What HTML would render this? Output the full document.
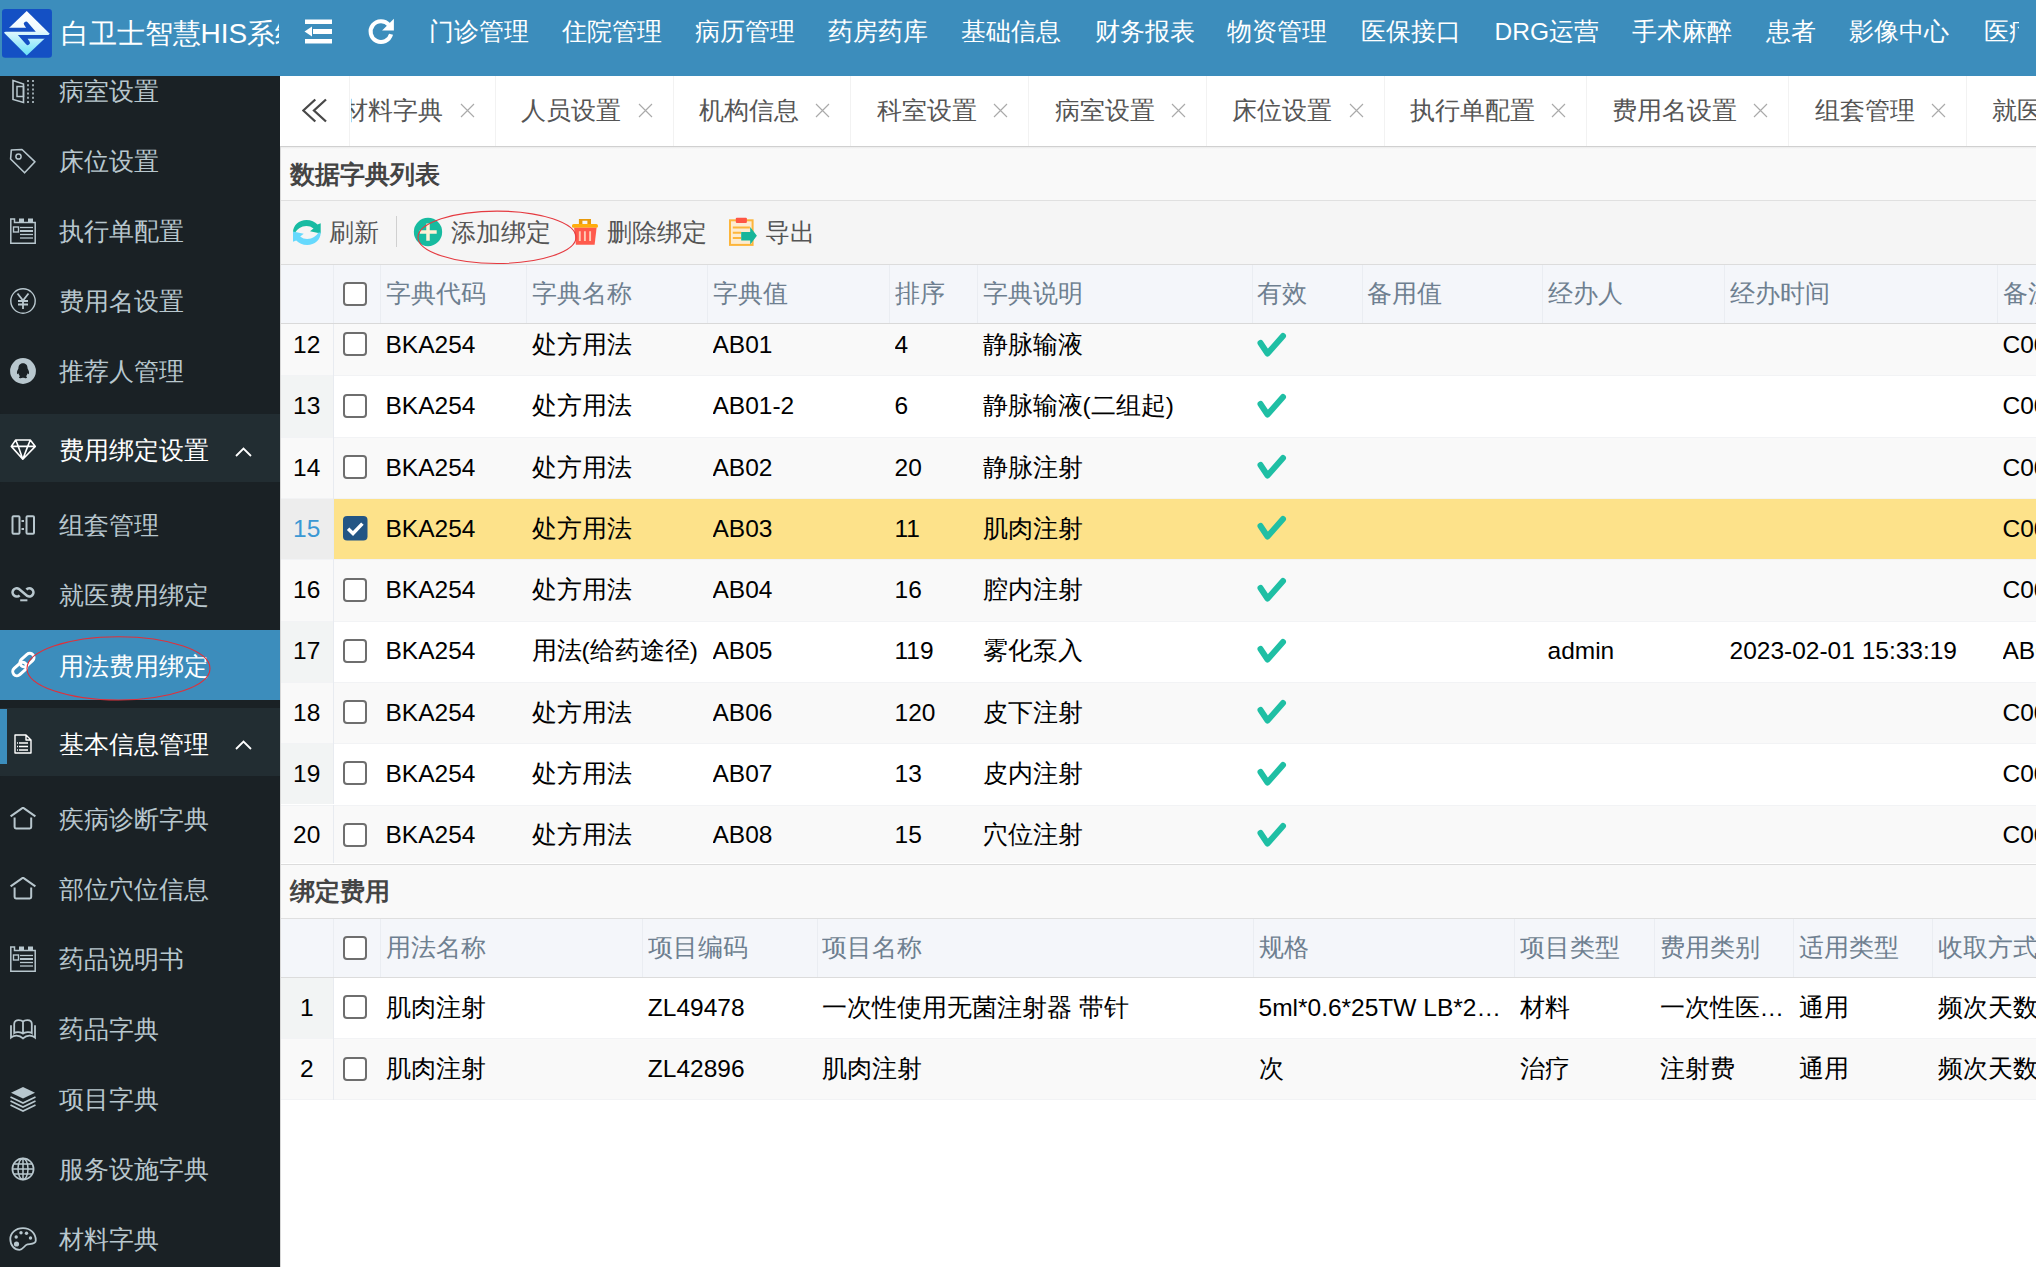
<!DOCTYPE html>
<html><head><meta charset="utf-8">
<style>
*{box-sizing:border-box;margin:0;padding:0}
html,body{width:2036px;height:1267px;overflow:hidden;background:#fff;font-family:"Liberation Sans",sans-serif}
div,span,svg{position:absolute}
.t{white-space:nowrap}
#hdr{left:0;top:0;width:2036px;height:76px;background:#3c8dbc;overflow:hidden}
#title{left:60.5px;top:-4.5px;width:218px;height:76px;line-height:76px;font-size:28px;color:#fff;white-space:nowrap;overflow:hidden}
.nav{top:0;height:64px;line-height:64px;font-size:24.5px;color:#fff;white-space:nowrap}
#side{left:0;top:76px;width:280px;height:1191px;background:#1a2125;overflow:hidden}
.si{left:0;width:280px;height:70px;line-height:70px;font-size:24.5px;color:#b8c7ce;white-space:nowrap}
.si span{left:59px;top:1px}
.grp{left:0;width:280px;height:68px;line-height:68px;background:#222d32;color:#fff;font-size:24.5px;white-space:nowrap}
.grp span{left:59px;top:3px}
.tab{top:0;height:70px;line-height:70px;font-size:24.5px;color:#555;white-space:nowrap;border-left:1px solid #eee}
.tc{font-size:24.5px;line-height:61.25px;height:61.25px;white-space:nowrap;overflow:hidden;color:#000}
.hc{font-size:24.5px;white-space:nowrap;overflow:hidden;color:#6e7f90}
.cb{width:24px;height:24px;border:2px solid #6e6e6e;border-radius:4px;background:#fff}
.ttl{font-size:24.5px;font-weight:bold;color:#444;white-space:nowrap}
.tb{font-size:24.5px;color:#555;white-space:nowrap}
</style></head><body>

<div id="hdr">
<svg style="left:0;top:5px" width="56" height="56" viewBox="0 0 1267 1267">
<defs><linearGradient id="lg" x1="0" y1="135" x2="0" y2="1145" gradientUnits="userSpaceOnUse">
<stop offset="0" stop-color="#ffffff"/><stop offset="0.4" stop-color="#f0fbfe"/><stop offset="1" stop-color="#66e0f8"/></linearGradient></defs>
<rect x="45" y="90" width="1130" height="1105" rx="75" fill="#1450c4"/>
<polygon points="605,135 1125,650 605,1145 90,630" fill="url(#lg)"/>
<path d="M60 515 L590 515 L548 455 A45 45 0 0 1 630 395 L810 603 L60 603 Z" fill="#1450c4"/>
<path d="M1160 765 L625 765 L667 825 A45 45 0 0 1 585 885 L405 677 L1160 677 Z" fill="#1450c4"/>
</svg>
<div id="title">白卫士智慧HIS系统</div>
<svg style="left:304px;top:19px" width="28" height="25" viewBox="0 0 28 25">
<rect x="1" y="0.5" width="27" height="4.5" fill="#fff"/>
<rect x="9" y="10" width="19" height="5" fill="#fff"/>
<polygon points="0.5,12.5 8,7.5 8,17.5" fill="#fff"/>
<rect x="1" y="20" width="27" height="4.5" fill="#fff"/>
</svg>
<svg style="left:360px;top:12px" width="40" height="40" viewBox="0 0 40 40">
<path d="M28.97 12.9 A10.4 10.4 0 1 0 31.05 22.3" fill="none" stroke="#fff" stroke-width="4.1"/>
<polygon points="33.9,6.8 33.9,18.6 22.1,18.6" fill="#fff"/>
</svg>
<div style="left:0;top:0;width:2019px;height:76px;overflow:hidden">
<div class="nav" style="left:429.0px">门诊管理</div>
<div class="nav" style="left:562.0px">住院管理</div>
<div class="nav" style="left:695.0px">病历管理</div>
<div class="nav" style="left:827.5px">药房药库</div>
<div class="nav" style="left:961.0px">基础信息</div>
<div class="nav" style="left:1094.5px">财务报表</div>
<div class="nav" style="left:1227.0px">物资管理</div>
<div class="nav" style="left:1361.0px">医保接口</div>
<div class="nav" style="left:1494.5px">DRG运营</div>
<div class="nav" style="left:1632.0px">手术麻醉</div>
<div class="nav" style="left:1765.5px">患者</div>
<div class="nav" style="left:1848.5px">影像中心</div>
<div class="nav" style="left:1983.5px">医疗</div>
</div>
</div>
<div id="side">
<div style="left:0;top:0;width:280px;height:338.4px;background:#1a2125;border-radius:0 0 3px 3px"></div>
<div class="si" style="top:-19.70px;"><span>病室设置</span></div>
<svg style="left:11px;top:3.299999999999997px" width="25" height="25" viewBox="0 0 25 25">
<path d="M2 1.5 L12.5 5 L12.5 23.5 L2 20.5 Z" fill="none" stroke="#b8c7ce" stroke-width="1.6"/>
<rect x="6" y="7.5" width="6.5" height="10" fill="none" stroke="#b8c7ce" stroke-width="1.5"/>
<line x1="17" y1="1" x2="17" y2="24" stroke="#b8c7ce" stroke-width="1.6" stroke-dasharray="2 2.2"/>
<line x1="22" y1="1" x2="22" y2="24" stroke="#b8c7ce" stroke-width="1.6" stroke-dasharray="2 2.2"/>
</svg>
<div class="si" style="top:50.00px;"><span>床位设置</span></div>
<svg style="left:9px;top:72px" width="28" height="26" viewBox="0 0 28 26">
<path d="M2.3 2 L13 1.5 L26 13.8 L15.6 24.8 L1.6 11 Z" fill="none" stroke="#b8c7ce" stroke-width="1.6" stroke-linejoin="round"/>
<circle cx="9.5" cy="8.5" r="2.6" fill="none" stroke="#b8c7ce" stroke-width="1.5"/>
</svg>
<div class="si" style="top:120.00px;"><span>执行单配置</span></div>
<svg style="left:10px;top:142px" width="26" height="26" viewBox="0 0 26 26">
<path d="M0.8 25.2 L0.8 1 L4.5 1 L4.5 4.5 L25.2 4.5 L25.2 25.2 Z" fill="none" stroke="#b8c7ce" stroke-width="1.5"/>
<rect x="9" y="0.5" width="5" height="4" fill="#b8c7ce"/><rect x="18" y="0.5" width="5" height="4" fill="#b8c7ce"/>
<rect x="3.5" y="9" width="5" height="5" fill="none" stroke="#b8c7ce" stroke-width="1.4"/>
<line x1="10" y1="9.5" x2="23" y2="9.5" stroke="#b8c7ce" stroke-width="1.3"/>
<line x1="10" y1="13" x2="23" y2="13" stroke="#b8c7ce" stroke-width="2"/>
<line x1="10" y1="16.5" x2="23" y2="16.5" stroke="#b8c7ce" stroke-width="1.3"/>
<line x1="10" y1="20" x2="23" y2="20" stroke="#b8c7ce" stroke-width="1.3"/>
</svg>
<div class="si" style="top:190.00px;"><span>费用名设置</span></div>
<svg style="left:10px;top:212px" width="26" height="26" viewBox="0 0 26 26">
<circle cx="13" cy="13" r="12.2" fill="none" stroke="#b8c7ce" stroke-width="1.4"/>
<path d="M7.5 5.5 L13 12.5 L18.5 5.5 M13 12.5 L13 21 M8 13 L18 13 M8 16.5 L18 16.5" fill="none" stroke="#b8c7ce" stroke-width="1.8"/>
</svg>
<div class="si" style="top:260.00px;"><span>推荐人管理</span></div>
<svg style="left:10px;top:282px" width="26" height="26" viewBox="0 0 26 26">
<circle cx="13" cy="13" r="12.9" fill="#b8c7ce"/>
<path d="M13 5.2 C9.8 5.2 8.4 7.6 8.4 10.5 C7.3 12.2 6.5 14.6 7.2 16 C7.6 16.5 8.2 15.6 8.4 15.2 C8.7 16.5 9.3 17.5 10 18.2 C8.8 18.7 8.4 19.8 10 20.2 C11.4 20.5 12.5 19.8 13 19.6 C13.5 19.8 14.6 20.5 16 20.2 C17.6 19.8 17.2 18.7 16 18.2 C16.7 17.5 17.3 16.5 17.6 15.2 C17.8 15.6 18.4 16.5 18.8 16 C19.5 14.6 18.7 12.2 17.6 10.5 C17.6 7.6 16.2 5.2 13 5.2 Z" fill="#1a2125"/>
</svg>
<div class="grp" style="top:338.4px"><span>费用绑定设置</span></div>
<svg style="left:10px;top:363px" width="27" height="23" viewBox="0 0 27 23">
<path d="M5.7 1 L20.3 1 L25.3 7.4 L12.8 20.2 L1.3 7.4 Z M1.3 7.4 L25.3 7.4 M5.7 1 L8.3 7.4 L12.8 20.2 L17.7 7.4 L20.3 1" fill="none" stroke="#ffffff" stroke-width="1.6" stroke-linejoin="round"/>
</svg>
<svg style="left:235px;top:370.5px" width="17" height="10" viewBox="0 0 17 10"><path d="M1 9 L8.5 1.5 L16 9" fill="none" stroke="#fff" stroke-width="1.8"/></svg>
<div style="left:0;top:406.0px;width:280px;height:226px;background:#1a2125;border-radius:3px"></div>
<div class="si" style="top:414.40px;"><span>组套管理</span></div>
<svg style="left:11px;top:439.4px" width="25" height="20" viewBox="0 0 25 20">
<rect x="1.5" y="1.2" width="7" height="17.6" rx="1" fill="none" stroke="#b8c7ce" stroke-width="2"/>
<rect x="15.5" y="1.2" width="7.5" height="17.6" rx="1" fill="none" stroke="#b8c7ce" stroke-width="2"/>
<rect x="10.5" y="5" width="2.5" height="2" fill="#b8c7ce"/><rect x="10.5" y="13" width="2.5" height="2" fill="#b8c7ce"/>
</svg>
<div class="si" style="top:484.00px;"><span>就医费用绑定</span></div>
<svg style="left:11px;top:511px" width="25" height="16" viewBox="0 0 25 16">
<path d="M8.6 8.3 A4.1 4.1 0 1 1 7.75 1.85 L16.25 8.95 A4.1 4.1 0 1 0 15.4 2.5" fill="none" stroke="#b8c7ce" stroke-width="2.6"/>
<rect x="9.2" y="12.3" width="7.2" height="2" fill="#b8c7ce"/>
</svg>
<div style="left:0;top:554.0px;width:280px;height:70px;background:#3c8dbc"></div>
<div class="si" style="top:555.00px;color:#fff"><span>用法费用绑定</span></div>
<svg style="left:5px;top:569px" width="40" height="40" viewBox="0 0 40 40">
<g fill="none" stroke="#ffffff" stroke-width="3.6" transform="translate(22.5 19.6) scale(0.84) translate(-22.5 -19.6)">
<rect x="12.4" y="9.2" width="19" height="10" rx="5" transform="rotate(-42 21.9 14.2)"/>
<rect x="3.8" y="19.9" width="19" height="10" rx="5" transform="rotate(-42 13.3 24.9)"/>
</g></svg>
<div class="grp" style="top:632.2px"><span>基本信息管理</span></div>
<div style="left:0;top:633.0px;width:7px;height:55px;background:#3c8dbc"></div>
<svg style="left:13px;top:657.6px" width="20" height="20" viewBox="0 0 20 20">
<path d="M2 1 L13 1 L18 6 L18 19 L2 19 Z M13 1 L13 6 L18 6" fill="none" stroke="#ffffff" stroke-width="1.4" stroke-linejoin="round"/>
<path d="M6 9 L15 9 M6 12.5 L15 12.5 M6 16 L15 16" stroke="#ffffff" stroke-width="1.3"/>
<path d="M4 9 L5 9 M4 12.5 L5 12.5 M4 16 L5 16" stroke="#ffffff" stroke-width="1.3"/>
</svg>
<svg style="left:235px;top:664.0px" width="17" height="10" viewBox="0 0 17 10"><path d="M1 9 L8.5 1.5 L16 9" fill="none" stroke="#fff" stroke-width="1.8"/></svg>
<div style="left:0;top:700.0px;width:280px;height:600px;background:#1a2125;border-radius:3px"></div>
<div class="si" style="top:708.00px;"><span>疾病诊断字典</span></div>
<svg style="left:9px;top:731px" width="28" height="24" viewBox="0 0 28 24">
<path d="M1.6 9.4 L14 0.6 L26.4 9.4" fill="none" stroke="#b8c7ce" stroke-width="2"/>
<path d="M5.6 10.4 L5.6 20 Q5.6 21.4 7 21.4 L20.8 21.4 Q22.2 21.4 22.2 20 L22.2 10.4" fill="none" stroke="#b8c7ce" stroke-width="2"/>
</svg>
<div class="si" style="top:778.00px;"><span>部位穴位信息</span></div>
<svg style="left:9px;top:801px" width="28" height="24" viewBox="0 0 28 24">
<path d="M1.6 9.4 L14 0.6 L26.4 9.4" fill="none" stroke="#b8c7ce" stroke-width="2"/>
<path d="M5.6 10.4 L5.6 20 Q5.6 21.4 7 21.4 L20.8 21.4 Q22.2 21.4 22.2 20 L22.2 10.4" fill="none" stroke="#b8c7ce" stroke-width="2"/>
</svg>
<div class="si" style="top:848.00px;"><span>药品说明书</span></div>
<svg style="left:10px;top:870px" width="26" height="26" viewBox="0 0 26 26">
<path d="M0.8 25.2 L0.8 1 L4.5 1 L4.5 4.5 L25.2 4.5 L25.2 25.2 Z" fill="none" stroke="#b8c7ce" stroke-width="1.5"/>
<rect x="9" y="0.5" width="5" height="4" fill="#b8c7ce"/><rect x="18" y="0.5" width="5" height="4" fill="#b8c7ce"/>
<rect x="3.5" y="9" width="5" height="5" fill="none" stroke="#b8c7ce" stroke-width="1.4"/>
<line x1="10" y1="9.5" x2="23" y2="9.5" stroke="#b8c7ce" stroke-width="1.3"/>
<line x1="10" y1="13" x2="23" y2="13" stroke="#b8c7ce" stroke-width="2"/>
<line x1="10" y1="16.5" x2="23" y2="16.5" stroke="#b8c7ce" stroke-width="1.3"/>
<line x1="10" y1="20" x2="23" y2="20" stroke="#b8c7ce" stroke-width="1.3"/>
</svg>
<div class="si" style="top:918.00px;"><span>药品字典</span></div>
<svg style="left:9px;top:942px" width="28" height="23" viewBox="0 0 28 23">
<path d="M14 15.5 C12 13.8 7 13.5 5.2 15 L5.2 6 C5.2 3 7.5 2.1 9.6 2.1 C11.5 2.1 13 2.5 14 3.5 C15 2.5 16.5 2.1 18.4 2.1 C20.5 2.1 22.8 3 22.8 6 L22.8 15 C21 13.5 16 13.8 14 15.5 Z M14 3.5 L14 15.5" fill="none" stroke="#b8c7ce" stroke-width="1.8"/>
<path d="M2 7.2 L2 19.5 C5 17 10 16.5 14 20.4 C18 16.5 23 17 26 19.5 L26 7.2" fill="none" stroke="#b8c7ce" stroke-width="1.8"/>
</svg>
<div class="si" style="top:988.00px;"><span>项目字典</span></div>
<svg style="left:9px;top:1010px" width="28" height="26" viewBox="0 0 28 26">
<polygon points="14,1 26,6.8 14,12.5 2,6.8" fill="#b8c7ce"/>
<path d="M1.5 11 L14 17 L26.5 11 M1.5 15 L14 21 L26.5 15 M1.5 19 L14 25 L26.5 19" fill="none" stroke="#b8c7ce" stroke-width="1.7"/>
</svg>
<div class="si" style="top:1058.00px;"><span>服务设施字典</span></div>
<svg style="left:11px;top:1081px" width="24" height="24" viewBox="0 0 24 24">
<circle cx="12" cy="12" r="10.6" fill="none" stroke="#b8c7ce" stroke-width="1.7"/>
<ellipse cx="12" cy="12" rx="5" ry="10.6" fill="none" stroke="#b8c7ce" stroke-width="1.5"/>
<path d="M12 1.4 L12 22.6 M1.4 12 L22.6 12 M3 7 L21 7 M3 17 L21 17" stroke="#b8c7ce" stroke-width="1.5"/>
</svg>
<div class="si" style="top:1128.00px;"><span>材料字典</span></div>
<svg style="left:9px;top:1151px" width="28" height="24" viewBox="0 0 28 24">
<path d="M14 1.2 C6.5 1.2 1.3 6 1.3 12 C1.3 18.5 5.5 22.8 10.5 22.8 C14 22.8 15 19 17.5 17.8 C20 16.6 26.8 17.8 26.8 13.5 C26.8 6.5 21.5 1.2 14 1.2 Z" fill="none" stroke="#b8c7ce" stroke-width="1.8"/>
<circle cx="7.5" cy="17" r="2.6" fill="#b8c7ce"/><circle cx="7.2" cy="10" r="1.7" fill="#b8c7ce"/>
<circle cx="12" cy="5.8" r="1.7" fill="#b8c7ce"/><circle cx="17.5" cy="6.3" r="1.7" fill="#b8c7ce"/><circle cx="21.5" cy="11" r="1.7" fill="#b8c7ce"/>
</svg>
<svg style="left:0;top:544.0px" width="280" height="100" viewBox="0 0 280 100"><ellipse cx="118.5" cy="48.4" rx="91.5" ry="31.6" fill="none" stroke="#e0303a" stroke-width="1.1"/></svg>
</div>
<div style="left:280px;top:76px;width:1756px;height:70px;background:#fff"></div>
<div style="left:280px;top:146px;width:1756px;height:1px;background:#d0d0d0"></div>
<div style="left:349px;top:76px;width:1px;height:70px;background:#f2f2f2"></div>
<svg style="left:302px;top:98px" width="26" height="25" viewBox="0 0 26 25">
<path d="M13.3 1.5 L1.3 12.5 L13.3 23.5 M24 1.5 L12 12.5 L24 23.5" fill="none" stroke="#484848" stroke-width="2.3"/>
</svg>
<div style="left:350.5px;top:76px;width:1686px;height:70px;overflow:hidden">
<div style="left:-33.5px;top:0;width:1px;height:70px;background:#f2f2f2"></div>
<div class="tab" style="left:-7.2px;border:0">材料字典</div>
<svg style="left:109.3px;top:27px" width="15" height="15" viewBox="0 0 15 15"><path d="M1 1 L14 14 M14 1 L1 14" stroke="#aaaaaa" stroke-width="1.15"/></svg>
<div style="left:144.3px;top:0;width:1px;height:70px;background:#f2f2f2"></div>
<div class="tab" style="left:170.6px;border:0">人员设置</div>
<svg style="left:287.1px;top:27px" width="15" height="15" viewBox="0 0 15 15"><path d="M1 1 L14 14 M14 1 L1 14" stroke="#aaaaaa" stroke-width="1.15"/></svg>
<div style="left:322.1px;top:0;width:1px;height:70px;background:#f2f2f2"></div>
<div class="tab" style="left:348.4px;border:0">机构信息</div>
<svg style="left:464.9px;top:27px" width="15" height="15" viewBox="0 0 15 15"><path d="M1 1 L14 14 M14 1 L1 14" stroke="#aaaaaa" stroke-width="1.15"/></svg>
<div style="left:499.9px;top:0;width:1px;height:70px;background:#f2f2f2"></div>
<div class="tab" style="left:526.2px;border:0">科室设置</div>
<svg style="left:642.7px;top:27px" width="15" height="15" viewBox="0 0 15 15"><path d="M1 1 L14 14 M14 1 L1 14" stroke="#aaaaaa" stroke-width="1.15"/></svg>
<div style="left:677.7px;top:0;width:1px;height:70px;background:#f2f2f2"></div>
<div class="tab" style="left:704.0px;border:0">病室设置</div>
<svg style="left:820.5px;top:27px" width="15" height="15" viewBox="0 0 15 15"><path d="M1 1 L14 14 M14 1 L1 14" stroke="#aaaaaa" stroke-width="1.15"/></svg>
<div style="left:855.5px;top:0;width:1px;height:70px;background:#f2f2f2"></div>
<div class="tab" style="left:881.8px;border:0">床位设置</div>
<svg style="left:998.3px;top:27px" width="15" height="15" viewBox="0 0 15 15"><path d="M1 1 L14 14 M14 1 L1 14" stroke="#aaaaaa" stroke-width="1.15"/></svg>
<div style="left:1033.3px;top:0;width:1px;height:70px;background:#f2f2f2"></div>
<div class="tab" style="left:1059.6px;border:0">执行单配置</div>
<svg style="left:1200.5px;top:27px" width="15" height="15" viewBox="0 0 15 15"><path d="M1 1 L14 14 M14 1 L1 14" stroke="#aaaaaa" stroke-width="1.15"/></svg>
<div style="left:1235.5px;top:0;width:1px;height:70px;background:#f2f2f2"></div>
<div class="tab" style="left:1261.8px;border:0">费用名设置</div>
<svg style="left:1402.7px;top:27px" width="15" height="15" viewBox="0 0 15 15"><path d="M1 1 L14 14 M14 1 L1 14" stroke="#aaaaaa" stroke-width="1.15"/></svg>
<div style="left:1437.7px;top:0;width:1px;height:70px;background:#f2f2f2"></div>
<div class="tab" style="left:1464.0px;border:0">组套管理</div>
<svg style="left:1580.5px;top:27px" width="15" height="15" viewBox="0 0 15 15"><path d="M1 1 L14 14 M14 1 L1 14" stroke="#aaaaaa" stroke-width="1.15"/></svg>
<div style="left:1615.5px;top:0;width:1px;height:70px;background:#f2f2f2"></div>
<div class="tab" style="left:1641.8px;border:0">就医费用绑定</div>
<svg style="left:1807.1px;top:27px" width="15" height="15" viewBox="0 0 15 15"><path d="M1 1 L14 14 M14 1 L1 14" stroke="#aaaaaa" stroke-width="1.15"/></svg>
</div>
<div style="left:280px;top:147px;width:1px;height:1120px;background:#d8d8d8"></div>
<div style="left:281px;top:147px;width:1755px;height:53.3px;background:#f9f9f9"></div>
<div style="left:281px;top:147px;width:1755px;height:2px;background:linear-gradient(#ebebeb,#f9f9f9)"></div>
<div style="left:281px;top:199.8px;width:1755px;height:1px;background:#e0e0e0"></div>
<div class="ttl" style="left:290.3px;top:148px;height:53px;line-height:53px">数据字典列表</div>
<div style="left:281px;top:200.8px;width:1755px;height:63.5px;background:#f5f5f5"></div>
<div style="left:281px;top:264px;width:1755px;height:1px;background:#dcdcdc"></div>
<svg style="left:288px;top:214px" width="40" height="36" viewBox="0 0 40 36">
<path d="M5 18.5 C5 11 11 6 18.5 6 C23 6 27 8 29.5 10.5 L32.7 9.2 L32.7 19.6 L22 17.3 L25.5 14.5 C23.5 12.8 21 12 18.5 12 C13 12 9.5 15 7.2 18.5 Z" fill="#17bba2"/>
<path d="M32.7 18.5 C32.7 26 26.7 31 19.2 31 C14.7 31 10.7 29 8.2 26.5 L5 27.8 L5 17.4 L15.7 19.7 L12.2 22.5 C14.2 24.2 16.7 25 19.2 25 C24.7 25 28.2 22 30.5 18.5 Z" fill="#66d9fd"/>
</svg>
<div class="tb" style="left:329px;top:200.8px;height:63.5px;line-height:63.5px">刷新</div>
<div style="left:396px;top:216px;width:1px;height:31px;background:#d0d0d0"></div>
<svg style="left:408px;top:212px" width="40" height="40" viewBox="0 0 40 40">
<circle cx="20" cy="20" r="14.15" fill="#17bba0"/>
<path d="M20 11.5 L20 28.7 M11.7 20.1 L28.7 20.1" stroke="#fff1d6" stroke-width="3.5"/>
</svg>
<div class="tb" style="left:450.5px;top:200.8px;height:63.5px;line-height:63.5px">添加绑定</div>
<svg style="left:566px;top:212px" width="38" height="38" viewBox="0 0 38 38">
<path d="M12.9 12.8 L12.9 7 L25 7 L25 12.8 L21.4 12.8 L21.4 8.8 L16.4 8.8 L16.4 12.8 Z" fill="#e8990a"/>
<rect x="6" y="12" width="25.9" height="3.8" rx="1.6" fill="#ffad0d"/>
<polygon points="8.1,15.7 30.6,15.7 28.6,32.8 9.9,32.8" fill="#ff5a4c"/>
<path d="M13.8 19.2 L13.8 29.1 M18.9 19.2 L18.9 29.1 M24.1 19.2 L24.1 29.1" stroke="#ffcab5" stroke-width="1.9"/>
</svg>
<div class="tb" style="left:607px;top:200.8px;height:63.5px;line-height:63.5px">删除绑定</div>
<svg style="left:722px;top:212px" width="40" height="38" viewBox="0 0 40 38">
<rect x="8" y="8.3" width="22.6" height="24.6" fill="#fdebd0" stroke="#fdb53a" stroke-width="2"/>
<rect x="13.8" y="5.8" width="11.1" height="5.3" rx="1" fill="#ff5544"/>
<path d="M10.8 15.6 L27.9 15.6 M10.8 20.7 L19.2 20.7 M10.8 25.9 L19.2 25.9" stroke="#fdb53a" stroke-width="2"/>
<polygon points="19.2,20.1 28.2,20.1 28.2,15 34.9,23.7 28.2,32.4 28.2,28.5 19.2,28.5" fill="#17b59a"/>
</svg>
<div class="tb" style="left:764.5px;top:200.8px;height:63.5px;line-height:63.5px">导出</div>
<svg style="left:400px;top:200px" width="200" height="70" viewBox="0 0 200 70"><ellipse cx="97" cy="37.3" rx="79" ry="26.2" fill="none" stroke="#e53a40" stroke-width="1.1"/></svg>
<div style="left:281px;top:265px;width:1755px;height:58.4px;background:#f4f6fa"></div>
<div style="left:281px;top:323px;width:1755px;height:1px;background:#d9d9d9"></div>
<div style="left:332.5px;top:265px;width:1px;height:58px;background:#eaedf2"></div>
<div style="left:380.0px;top:265px;width:1px;height:58px;background:#eaedf2"></div>
<div style="left:526.0px;top:265px;width:1px;height:58px;background:#eaedf2"></div>
<div style="left:707.0px;top:265px;width:1px;height:58px;background:#eaedf2"></div>
<div style="left:889.0px;top:265px;width:1px;height:58px;background:#eaedf2"></div>
<div style="left:977.0px;top:265px;width:1px;height:58px;background:#eaedf2"></div>
<div style="left:1251.5px;top:265px;width:1px;height:58px;background:#eaedf2"></div>
<div style="left:1361.5px;top:265px;width:1px;height:58px;background:#eaedf2"></div>
<div style="left:1542.0px;top:265px;width:1px;height:58px;background:#eaedf2"></div>
<div style="left:1724.0px;top:265px;width:1px;height:58px;background:#eaedf2"></div>
<div style="left:1997.0px;top:265px;width:1px;height:58px;background:#eaedf2"></div>
<div class="cb" style="left:343px;top:281.50px"></div>
<div class="hc" style="left:385.5px;top:265px;height:58.4px;line-height:58.4px;width:140.0px">字典代码</div>
<div class="hc" style="left:531.5px;top:265px;height:58.4px;line-height:58.4px;width:175.0px">字典名称</div>
<div class="hc" style="left:712.5px;top:265px;height:58.4px;line-height:58.4px;width:176.0px">字典值</div>
<div class="hc" style="left:894.5px;top:265px;height:58.4px;line-height:58.4px;width:82.0px">排序</div>
<div class="hc" style="left:982.5px;top:265px;height:58.4px;line-height:58.4px;width:268.5px">字典说明</div>
<div class="hc" style="left:1257.0px;top:265px;height:58.4px;line-height:58.4px;width:104.0px">有效</div>
<div class="hc" style="left:1367.0px;top:265px;height:58.4px;line-height:58.4px;width:174.5px">备用值</div>
<div class="hc" style="left:1547.5px;top:265px;height:58.4px;line-height:58.4px;width:176.0px">经办人</div>
<div class="hc" style="left:1729.5px;top:265px;height:58.4px;line-height:58.4px;width:267.0px">经办时间</div>
<div class="hc" style="left:2002.5px;top:265px;height:58.4px;line-height:58.4px;width:97.0px">备注</div>
<div style="left:281px;top:324px;width:1755px;height:539px;overflow:hidden">
<div style="left:0;top:-9.90px;width:1755px;height:1px;background:#f2f3f5"></div>
<div style="left:0;top:-8.90px;width:1755px;height:60.3px;background:#f9f9f9"></div>
<div style="left:0;top:-8.90px;width:51.5px;height:60.3px;background:#f9f9f9"></div>
<div style="left:51.5px;top:-9.90px;width:1px;height:61.3px;background:#e8ebf0"></div>
<div class="tc" style="left:0;top:-10.10px;width:51.5px;text-align:center;color:#000">12</div>
<div class="cb" style="left:62px;top:8.30px"></div>
<div class="tc" style="left:104.5px;top:-10.10px;width:146.0px">BKA254</div>
<div class="tc" style="left:250.5px;top:-10.10px;width:181.0px">处方用法</div>
<div class="tc" style="left:431.5px;top:-10.10px;width:182.0px">AB01</div>
<div class="tc" style="left:613.5px;top:-10.10px;width:88.0px">4</div>
<div class="tc" style="left:701.5px;top:-10.10px;width:274.5px">静脉输液</div>
<svg style="left:975.5px;top:7.50px" width="30" height="26" viewBox="0 0 30 26"><path d="M3.5 11 L10.5 21.5 L26 4" fill="none" stroke="#1fbfa4" stroke-width="6" stroke-linecap="round" stroke-linejoin="round"/></svg>
<div class="tc" style="left:1721.5px;top:-10.10px;width:103.0px">C00</div>
<div style="left:0;top:51.40px;width:1755px;height:1px;background:#f2f3f5"></div>
<div style="left:0;top:52.40px;width:1755px;height:60.3px;background:#ffffff"></div>
<div style="left:0;top:52.40px;width:51.5px;height:60.3px;background:#f2f4f4"></div>
<div style="left:51.5px;top:51.40px;width:1px;height:61.3px;background:#e8ebf0"></div>
<div class="tc" style="left:0;top:51.20px;width:51.5px;text-align:center;color:#000">13</div>
<div class="cb" style="left:62px;top:69.60px"></div>
<div class="tc" style="left:104.5px;top:51.20px;width:146.0px">BKA254</div>
<div class="tc" style="left:250.5px;top:51.20px;width:181.0px">处方用法</div>
<div class="tc" style="left:431.5px;top:51.20px;width:182.0px">AB01-2</div>
<div class="tc" style="left:613.5px;top:51.20px;width:88.0px">6</div>
<div class="tc" style="left:701.5px;top:51.20px;width:274.5px">静脉输液(二组起)</div>
<svg style="left:975.5px;top:68.80px" width="30" height="26" viewBox="0 0 30 26"><path d="M3.5 11 L10.5 21.5 L26 4" fill="none" stroke="#1fbfa4" stroke-width="6" stroke-linecap="round" stroke-linejoin="round"/></svg>
<div class="tc" style="left:1721.5px;top:51.20px;width:103.0px">C00</div>
<div style="left:0;top:112.70px;width:1755px;height:1px;background:#f2f3f5"></div>
<div style="left:0;top:113.70px;width:1755px;height:60.3px;background:#f9f9f9"></div>
<div style="left:0;top:113.70px;width:51.5px;height:60.3px;background:#f9f9f9"></div>
<div style="left:51.5px;top:112.70px;width:1px;height:61.3px;background:#e8ebf0"></div>
<div class="tc" style="left:0;top:112.50px;width:51.5px;text-align:center;color:#000">14</div>
<div class="cb" style="left:62px;top:130.90px"></div>
<div class="tc" style="left:104.5px;top:112.50px;width:146.0px">BKA254</div>
<div class="tc" style="left:250.5px;top:112.50px;width:181.0px">处方用法</div>
<div class="tc" style="left:431.5px;top:112.50px;width:182.0px">AB02</div>
<div class="tc" style="left:613.5px;top:112.50px;width:88.0px">20</div>
<div class="tc" style="left:701.5px;top:112.50px;width:274.5px">静脉注射</div>
<svg style="left:975.5px;top:130.10px" width="30" height="26" viewBox="0 0 30 26"><path d="M3.5 11 L10.5 21.5 L26 4" fill="none" stroke="#1fbfa4" stroke-width="6" stroke-linecap="round" stroke-linejoin="round"/></svg>
<div class="tc" style="left:1721.5px;top:112.50px;width:103.0px">C00</div>
<div style="left:0;top:174.00px;width:1755px;height:1px;background:#f2f3f5"></div>
<div style="left:0;top:175.00px;width:1755px;height:60.3px;background:#fde28a"></div>
<div style="left:0;top:175.00px;width:51.5px;height:60.3px;background:#ededed"></div>
<div style="left:51.5px;top:174.00px;width:1px;height:61.3px;background:#e8ebf0"></div>
<div class="tc" style="left:0;top:173.80px;width:51.5px;text-align:center;color:#3a98d4">15</div>
<svg style="left:62px;top:192.20px" width="24.5" height="24.5" viewBox="0 0 24 24"><rect x="0" y="0" width="24" height="24" rx="4" fill="#235584"/><path d="M5 12.5 L9.8 17.2 L19 7.5" fill="none" stroke="#fff" stroke-width="3.4"/></svg>
<div class="tc" style="left:104.5px;top:173.80px;width:146.0px">BKA254</div>
<div class="tc" style="left:250.5px;top:173.80px;width:181.0px">处方用法</div>
<div class="tc" style="left:431.5px;top:173.80px;width:182.0px">AB03</div>
<div class="tc" style="left:613.5px;top:173.80px;width:88.0px">11</div>
<div class="tc" style="left:701.5px;top:173.80px;width:274.5px">肌肉注射</div>
<svg style="left:975.5px;top:191.40px" width="30" height="26" viewBox="0 0 30 26"><path d="M3.5 11 L10.5 21.5 L26 4" fill="none" stroke="#1fbfa4" stroke-width="6" stroke-linecap="round" stroke-linejoin="round"/></svg>
<div class="tc" style="left:1721.5px;top:173.80px;width:103.0px">C00</div>
<div style="left:0;top:235.30px;width:1755px;height:1px;background:#f2f3f5"></div>
<div style="left:0;top:236.30px;width:1755px;height:60.3px;background:#f9f9f9"></div>
<div style="left:0;top:236.30px;width:51.5px;height:60.3px;background:#f9f9f9"></div>
<div style="left:51.5px;top:235.30px;width:1px;height:61.3px;background:#e8ebf0"></div>
<div class="tc" style="left:0;top:235.10px;width:51.5px;text-align:center;color:#000">16</div>
<div class="cb" style="left:62px;top:253.50px"></div>
<div class="tc" style="left:104.5px;top:235.10px;width:146.0px">BKA254</div>
<div class="tc" style="left:250.5px;top:235.10px;width:181.0px">处方用法</div>
<div class="tc" style="left:431.5px;top:235.10px;width:182.0px">AB04</div>
<div class="tc" style="left:613.5px;top:235.10px;width:88.0px">16</div>
<div class="tc" style="left:701.5px;top:235.10px;width:274.5px">腔内注射</div>
<svg style="left:975.5px;top:252.70px" width="30" height="26" viewBox="0 0 30 26"><path d="M3.5 11 L10.5 21.5 L26 4" fill="none" stroke="#1fbfa4" stroke-width="6" stroke-linecap="round" stroke-linejoin="round"/></svg>
<div class="tc" style="left:1721.5px;top:235.10px;width:103.0px">C00</div>
<div style="left:0;top:296.60px;width:1755px;height:1px;background:#f2f3f5"></div>
<div style="left:0;top:297.60px;width:1755px;height:60.3px;background:#ffffff"></div>
<div style="left:0;top:297.60px;width:51.5px;height:60.3px;background:#f2f4f4"></div>
<div style="left:51.5px;top:296.60px;width:1px;height:61.3px;background:#e8ebf0"></div>
<div class="tc" style="left:0;top:296.40px;width:51.5px;text-align:center;color:#000">17</div>
<div class="cb" style="left:62px;top:314.80px"></div>
<div class="tc" style="left:104.5px;top:296.40px;width:146.0px">BKA254</div>
<div class="tc" style="left:250.5px;top:296.40px;width:181.0px">用法(给药途径)</div>
<div class="tc" style="left:431.5px;top:296.40px;width:182.0px">AB05</div>
<div class="tc" style="left:613.5px;top:296.40px;width:88.0px">119</div>
<div class="tc" style="left:701.5px;top:296.40px;width:274.5px">雾化泵入</div>
<svg style="left:975.5px;top:314.00px" width="30" height="26" viewBox="0 0 30 26"><path d="M3.5 11 L10.5 21.5 L26 4" fill="none" stroke="#1fbfa4" stroke-width="6" stroke-linecap="round" stroke-linejoin="round"/></svg>
<div class="tc" style="left:1266.5px;top:296.40px;width:182.0px">admin</div>
<div class="tc" style="left:1448.5px;top:296.40px;width:273.0px">2023-02-01 15:33:19</div>
<div class="tc" style="left:1721.5px;top:296.40px;width:103.0px">AB05</div>
<div style="left:0;top:357.90px;width:1755px;height:1px;background:#f2f3f5"></div>
<div style="left:0;top:358.90px;width:1755px;height:60.3px;background:#f9f9f9"></div>
<div style="left:0;top:358.90px;width:51.5px;height:60.3px;background:#f9f9f9"></div>
<div style="left:51.5px;top:357.90px;width:1px;height:61.3px;background:#e8ebf0"></div>
<div class="tc" style="left:0;top:357.70px;width:51.5px;text-align:center;color:#000">18</div>
<div class="cb" style="left:62px;top:376.10px"></div>
<div class="tc" style="left:104.5px;top:357.70px;width:146.0px">BKA254</div>
<div class="tc" style="left:250.5px;top:357.70px;width:181.0px">处方用法</div>
<div class="tc" style="left:431.5px;top:357.70px;width:182.0px">AB06</div>
<div class="tc" style="left:613.5px;top:357.70px;width:88.0px">120</div>
<div class="tc" style="left:701.5px;top:357.70px;width:274.5px">皮下注射</div>
<svg style="left:975.5px;top:375.30px" width="30" height="26" viewBox="0 0 30 26"><path d="M3.5 11 L10.5 21.5 L26 4" fill="none" stroke="#1fbfa4" stroke-width="6" stroke-linecap="round" stroke-linejoin="round"/></svg>
<div class="tc" style="left:1721.5px;top:357.70px;width:103.0px">C00</div>
<div style="left:0;top:419.20px;width:1755px;height:1px;background:#f2f3f5"></div>
<div style="left:0;top:420.20px;width:1755px;height:60.3px;background:#ffffff"></div>
<div style="left:0;top:420.20px;width:51.5px;height:60.3px;background:#f2f4f4"></div>
<div style="left:51.5px;top:419.20px;width:1px;height:61.3px;background:#e8ebf0"></div>
<div class="tc" style="left:0;top:419.00px;width:51.5px;text-align:center;color:#000">19</div>
<div class="cb" style="left:62px;top:437.40px"></div>
<div class="tc" style="left:104.5px;top:419.00px;width:146.0px">BKA254</div>
<div class="tc" style="left:250.5px;top:419.00px;width:181.0px">处方用法</div>
<div class="tc" style="left:431.5px;top:419.00px;width:182.0px">AB07</div>
<div class="tc" style="left:613.5px;top:419.00px;width:88.0px">13</div>
<div class="tc" style="left:701.5px;top:419.00px;width:274.5px">皮内注射</div>
<svg style="left:975.5px;top:436.60px" width="30" height="26" viewBox="0 0 30 26"><path d="M3.5 11 L10.5 21.5 L26 4" fill="none" stroke="#1fbfa4" stroke-width="6" stroke-linecap="round" stroke-linejoin="round"/></svg>
<div class="tc" style="left:1721.5px;top:419.00px;width:103.0px">C00</div>
<div style="left:0;top:480.50px;width:1755px;height:1px;background:#f2f3f5"></div>
<div style="left:0;top:481.50px;width:1755px;height:60.3px;background:#f9f9f9"></div>
<div style="left:0;top:481.50px;width:51.5px;height:60.3px;background:#f9f9f9"></div>
<div style="left:51.5px;top:480.50px;width:1px;height:61.3px;background:#e8ebf0"></div>
<div class="tc" style="left:0;top:480.30px;width:51.5px;text-align:center;color:#000">20</div>
<div class="cb" style="left:62px;top:498.70px"></div>
<div class="tc" style="left:104.5px;top:480.30px;width:146.0px">BKA254</div>
<div class="tc" style="left:250.5px;top:480.30px;width:181.0px">处方用法</div>
<div class="tc" style="left:431.5px;top:480.30px;width:182.0px">AB08</div>
<div class="tc" style="left:613.5px;top:480.30px;width:88.0px">15</div>
<div class="tc" style="left:701.5px;top:480.30px;width:274.5px">穴位注射</div>
<svg style="left:975.5px;top:497.90px" width="30" height="26" viewBox="0 0 30 26"><path d="M3.5 11 L10.5 21.5 L26 4" fill="none" stroke="#1fbfa4" stroke-width="6" stroke-linecap="round" stroke-linejoin="round"/></svg>
<div class="tc" style="left:1721.5px;top:480.30px;width:103.0px">C00</div>
</div>
<div style="left:281px;top:864px;width:1755px;height:1px;background:#dcdcdc"></div>
<div style="left:281px;top:865px;width:1755px;height:53px;background:#f9f9f9"></div>
<div style="left:281px;top:918px;width:1755px;height:1px;background:#dfdfdf"></div>
<div class="ttl" style="left:290.3px;top:864.5px;height:54px;line-height:54px">绑定费用</div>
<div style="left:281px;top:919px;width:1755px;height:58px;background:#f4f6fa"></div>
<div style="left:281px;top:977px;width:1755px;height:1px;background:#dcdcdc"></div>
<div style="left:332.5px;top:918.8px;width:1px;height:58px;background:#eaedf2"></div>
<div style="left:380.0px;top:918.8px;width:1px;height:58px;background:#eaedf2"></div>
<div style="left:642.3px;top:918.8px;width:1px;height:58px;background:#eaedf2"></div>
<div style="left:816.6px;top:918.8px;width:1px;height:58px;background:#eaedf2"></div>
<div style="left:1253.0px;top:918.8px;width:1px;height:58px;background:#eaedf2"></div>
<div style="left:1514.0px;top:918.8px;width:1px;height:58px;background:#eaedf2"></div>
<div style="left:1654.0px;top:918.8px;width:1px;height:58px;background:#eaedf2"></div>
<div style="left:1793.0px;top:918.8px;width:1px;height:58px;background:#eaedf2"></div>
<div style="left:1932.0px;top:918.8px;width:1px;height:58px;background:#eaedf2"></div>
<div class="cb" style="left:343px;top:935.50px"></div>
<div class="hc" style="left:385.5px;top:918.8px;height:58.2px;line-height:58.2px;width:256.3px">用法名称</div>
<div class="hc" style="left:647.8px;top:918.8px;height:58.2px;line-height:58.2px;width:168.3px">项目编码</div>
<div class="hc" style="left:822.1px;top:918.8px;height:58.2px;line-height:58.2px;width:430.4px">项目名称</div>
<div class="hc" style="left:1258.5px;top:918.8px;height:58.2px;line-height:58.2px;width:255.0px">规格</div>
<div class="hc" style="left:1519.5px;top:918.8px;height:58.2px;line-height:58.2px;width:134.0px">项目类型</div>
<div class="hc" style="left:1659.5px;top:918.8px;height:58.2px;line-height:58.2px;width:133.0px">费用类别</div>
<div class="hc" style="left:1798.5px;top:918.8px;height:58.2px;line-height:58.2px;width:133.0px">适用类型</div>
<div class="hc" style="left:1937.5px;top:918.8px;height:58.2px;line-height:58.2px;width:262.0px">收取方式</div>
<div style="left:281px;top:978.00px;width:1755px;height:60px;background:#ffffff"></div>
<div style="left:281px;top:1038.00px;width:1755px;height:1px;background:#f2f3f5"></div>
<div style="left:281px;top:978.00px;width:51.5px;height:60px;background:#f2f4f4"></div>
<div style="left:332.5px;top:978.00px;width:1px;height:61px;background:#e8ebf0"></div>
<div class="tc" style="left:281px;top:976.80px;width:51.5px;text-align:center">1</div>
<div class="cb" style="left:343px;top:995.20px"></div>
<div class="tc" style="left:385.5px;top:976.80px;width:262.3px">肌肉注射</div>
<div class="tc" style="left:647.8px;top:976.80px;width:174.3px">ZL49478</div>
<div class="tc" style="left:822.1px;top:976.80px;width:436.4px">一次性使用无菌注射器 带针</div>
<div class="tc" style="left:1258.5px;top:976.80px;width:261.0px">5ml*0.6*25TW LB*2…</div>
<div class="tc" style="left:1519.5px;top:976.80px;width:140.0px">材料</div>
<div class="tc" style="left:1659.5px;top:976.80px;width:139.0px">一次性医…</div>
<div class="tc" style="left:1798.5px;top:976.80px;width:139.0px">通用</div>
<div class="tc" style="left:1937.5px;top:976.80px;width:98.5px">频次天数</div>
<div style="left:281px;top:1039.00px;width:1755px;height:60px;background:#f9f9f9"></div>
<div style="left:281px;top:1099.00px;width:1755px;height:1px;background:#f2f3f5"></div>
<div style="left:281px;top:1039.00px;width:51.5px;height:60px;background:#f9f9f9"></div>
<div style="left:332.5px;top:1039.00px;width:1px;height:61px;background:#e8ebf0"></div>
<div class="tc" style="left:281px;top:1038.10px;width:51.5px;text-align:center">2</div>
<div class="cb" style="left:343px;top:1056.50px"></div>
<div class="tc" style="left:385.5px;top:1038.10px;width:262.3px">肌肉注射</div>
<div class="tc" style="left:647.8px;top:1038.10px;width:174.3px">ZL42896</div>
<div class="tc" style="left:822.1px;top:1038.10px;width:436.4px">肌肉注射</div>
<div class="tc" style="left:1258.5px;top:1038.10px;width:261.0px">次</div>
<div class="tc" style="left:1519.5px;top:1038.10px;width:140.0px">治疗</div>
<div class="tc" style="left:1659.5px;top:1038.10px;width:139.0px">注射费</div>
<div class="tc" style="left:1798.5px;top:1038.10px;width:139.0px">通用</div>
<div class="tc" style="left:1937.5px;top:1038.10px;width:98.5px">频次天数</div>
</body></html>
